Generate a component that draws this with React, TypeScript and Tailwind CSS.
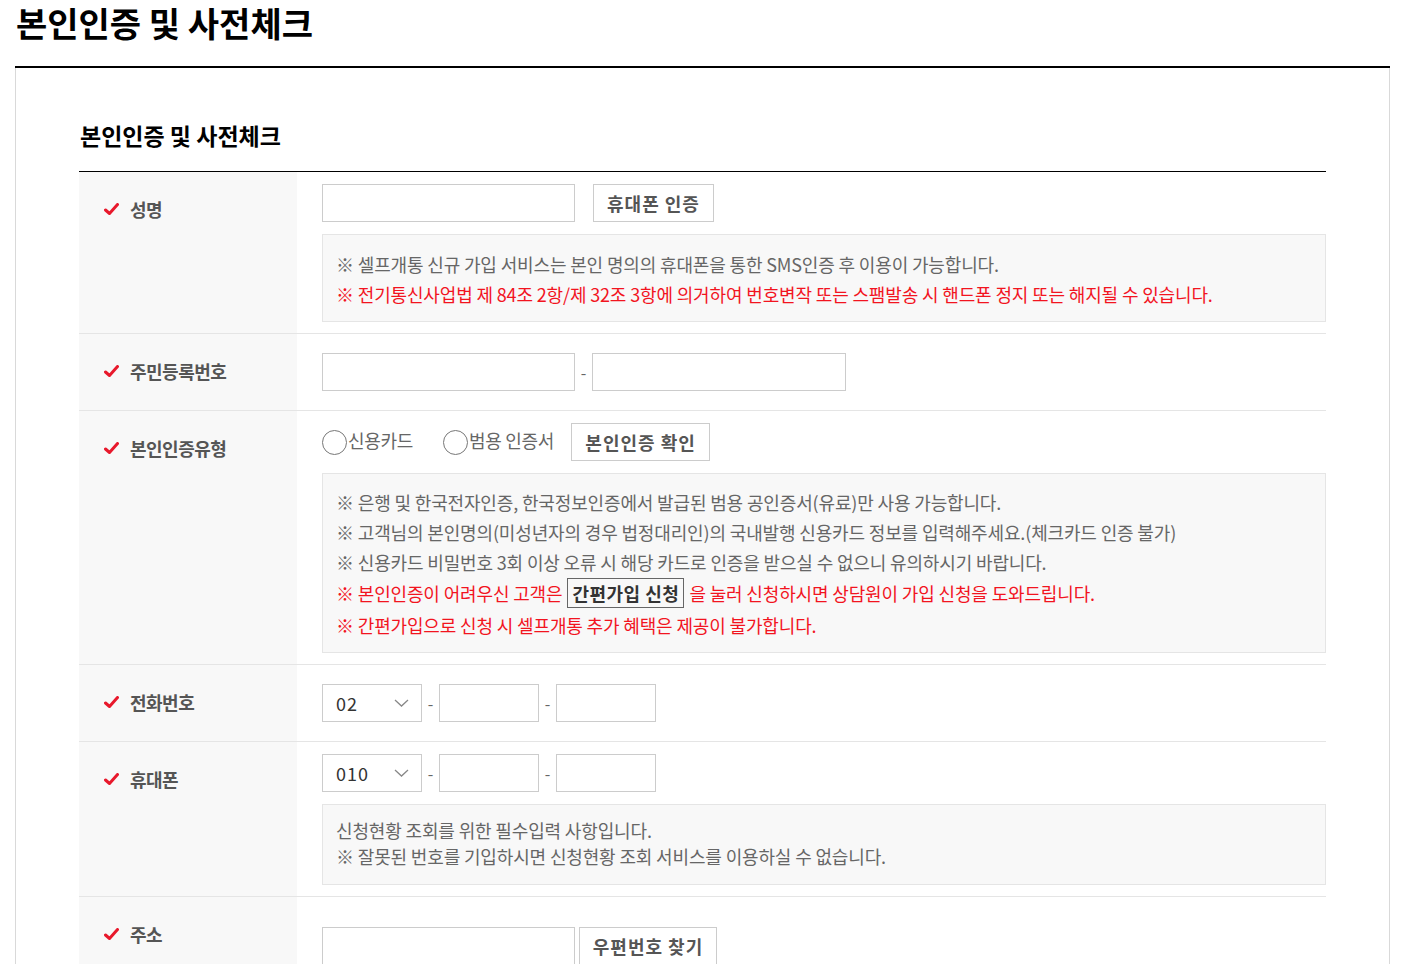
import { ReactNode } from 'react';

const font = { fontFamily: '"Noto Sans CJK KR", "Noto Sans", sans-serif' };

const Check = () => (
  <svg width="15" height="13" viewBox="0 0 15 13" className="shrink-0">
    <path d="M1.5 7 L5.5 10.5 L13.5 1.5" fill="none" stroke="#e8192c" strokeWidth="3" strokeLinecap="round" strokeLinejoin="round" />
  </svg>
);

const Chevron = () => (
  <svg width="15" height="8" viewBox="0 0 15 8">
    <path d="M1 1 L7.5 7 L14 1" fill="none" stroke="#888" strokeWidth="1.3" />
  </svg>
);

const Label = ({ label }: { label: string }) => (
  <div className="flex items-center gap-[11px] h-[24px]">
    <Check />
    <span className="text-[18px] font-bold text-[#555] tracking-[-0.5px]">{label}</span>
  </div>
);

const Row = ({ label, children, pad }: { label: string; children: ReactNode; pad: string }) => (
  <div className="flex border-b border-[#e5e5e5]">
    <div className="w-[218px] shrink-0 bg-[#f8f8f8] pl-[25px] pt-[25px]">
      <Label label={label} />
    </div>
    <div className={`flex-1 pl-[25px] ${pad}`}>{children}</div>
  </div>
);

const Input = ({ w }: { w: string }) => <div className={`${w} h-[38px] border border-[#ccc] bg-white`} />;

const Btn = ({ children, w }: { children: ReactNode; w: string }) => (
  <div className={`${w} h-[38px] border border-[#ccc] bg-white flex items-center justify-center text-[18px] font-bold text-[#555] tracking-[1px]`}>
    {children}
  </div>
);

const Select = ({ value }: { value: string }) => (
  <div className="w-[100px] h-[38px] border border-[#ccc] bg-white flex items-center justify-between pl-[13px] pr-[12px] text-[18px] text-[#333] tracking-[1px]">
    <span>{value}</span>
    <Chevron />
  </div>
);

const Dash = () => <span className="text-[#666] text-[16px] w-[17px] text-center">-</span>;

const Info = ({ children, cls }: { children: ReactNode; cls: string }) => (
  <div className={`mt-[12px] border border-[#e5e5e5] bg-[#f8f8f8] pl-[13px] text-[18px] text-[#666] tracking-[-0.15px] ${cls}`}>
    {children}
  </div>
);

const Radio = ({ label, cls }: { label: string; cls: string }) => (
  <div className={`flex items-center text-[18px] text-[#666] tracking-[-0.3px] ${cls}`}>
    <span className="w-[25px] h-[25px] rounded-full border border-[#777] bg-white" />
    <span className="ml-[1px] -mt-[3px]">{label}</span>
  </div>
);

const red = 'text-[#f2141f]';

export default function App() {
  return (
    <div className="min-h-screen bg-white px-[15px]" style={font}>
      <h1 className="pl-[1px] text-[34px] font-bold text-black leading-[46px] pb-[20px] border-b-2 border-black">
        본인인증 및 사전체크
      </h1>
      <div className="border-x border-[#d9d9d9] px-[63px] pt-[51px]">
        <h2 className="pl-[1px] text-[23px] font-bold text-black leading-[32px] pb-[20px] border-b border-black">
          본인인증 및 사전체크
        </h2>

        <Row label="성명" pad="pt-[12px] pb-[11px]">
          <div className="flex items-center">
            <Input w="w-[253px]" />
            <div className="w-[18px]" />
            <Btn w="w-[121px]">휴대폰 인증</Btn>
          </div>
          <Info cls="pt-[14px] pb-[12px] leading-[30px]">
            <p>※ 셀프개통 신규 가입 서비스는 본인 명의의 휴대폰을 통한 SMS인증 후 이용이 가능합니다.</p>
            <p className={red}>※ 전기통신사업법 제 84조 2항/제 32조 3항에 의거하여 번호변작 또는 스팸발송 시 핸드폰 정지 또는 해지될 수 있습니다.</p>
          </Info>
        </Row>

        <Row label="주민등록번호" pad="pt-[19px] pb-[19px]">
          <div className="flex items-center">
            <Input w="w-[253px]" />
            <Dash />
            <Input w="w-[254px]" />
          </div>
        </Row>

        <Row label="본인인증유형" pad="pt-[12px] pb-[11px]">
          <div className="flex items-center h-[38px]">
            <Radio label="신용카드" cls="" />
            <Radio label="범용 인증서" cls="ml-[30px]" />
            <div className="w-[17px]" />
            <Btn w="w-[139px]">본인인증 확인</Btn>
          </div>
          <Info cls="pt-[13px] pb-[12px] leading-[30px]">
            <p>※ 은행 및 한국전자인증, 한국정보인증에서 발급된 범용 공인증서(유료)만 사용 가능합니다.</p>
            <p>※ 고객님의 본인명의(미성년자의 경우 법정대리인)의 국내발행 신용카드 정보를 입력해주세요.(체크카드 인증 불가)</p>
            <p>※ 신용카드 비밀번호 3회 이상 오류 시 해당 카드로 인증을 받으실 수 없으니 유의하시기 바랍니다.</p>
            <div className={`${red} flex items-center h-[31px]`}>
              <span>※ 본인인증이 어려우신 고객은</span>
              <span className="ml-[5px] h-[30px] leading-[28px] border border-[#666] px-[4px] font-bold text-[#333] tracking-[0.5px]">
                간편가입 신청
              </span>
              <span className="ml-[5px]">을 눌러 신청하시면 상담원이 가입 신청을 도와드립니다.</span>
            </div>
            <p className={`${red} pt-[2px]`}>※ 간편가입으로 신청 시 셀프개통 추가 혜택은 제공이 불가합니다.</p>
          </Info>
        </Row>

        <Row label="전화번호" pad="pt-[19px] pb-[19px]">
          <div className="flex items-center">
            <Select value="02" />
            <Dash />
            <Input w="w-[100px]" />
            <Dash />
            <Input w="w-[100px]" />
          </div>
        </Row>

        <Row label="휴대폰" pad="pt-[12px] pb-[11px]">
          <div className="flex items-center">
            <Select value="010" />
            <Dash />
            <Input w="w-[100px]" />
            <Dash />
            <Input w="w-[100px]" />
          </div>
          <Info cls="pt-[12px] pb-[15px] leading-[26px]">
            <p>신청현황 조회를 위한 필수입력 사항입니다.</p>
            <p>※ 잘못된 번호를 기입하시면 신청현황 조회 서비스를 이용하실 수 없습니다.</p>
          </Info>
        </Row>

        <div className="flex">
          <div className="w-[218px] shrink-0 bg-[#f8f8f8] pl-[25px] pt-[25px] pb-[40px]">
            <Label label="주소" />
          </div>
          <div className="flex-1 pl-[25px] pt-[30px]">
            <div className="flex items-center">
              <Input w="w-[253px]" />
              <div className="w-[4px]" />
              <Btn w="w-[138px]">우편번호 찾기</Btn>
            </div>
          </div>
        </div>
      </div>
    </div>
  );
}
